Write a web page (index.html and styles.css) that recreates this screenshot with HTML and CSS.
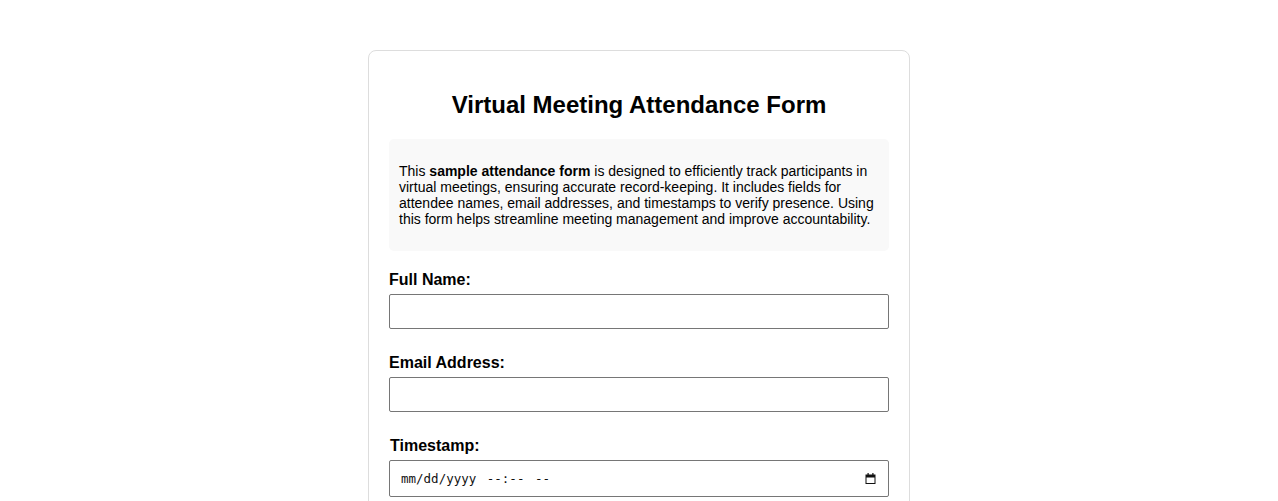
FILE: index.html
```html
<!DOCTYPE html>
<html lang="en">
<head>
<meta charset="utf-8">
<title>Virtual Meeting Attendance Form</title>
<link rel="stylesheet" href="styles.css">
</head>
<body>
<div class="card">
  <h2 class="title">Virtual Meeting Attendance Form</h2>
  <div class="desc">
    <p>This <strong>sample attendance form</strong> is designed to efficiently track participants in virtual meetings, ensuring accurate record-keeping. It includes fields for attendee names, email addresses, and timestamps to verify presence. Using this form helps streamline meeting management and improve accountability.</p>
  </div>
  <form class="form">
    <div class="group">
      <label class="label" for="name">Full Name:</label>
      <input class="field" type="text" id="name">
    </div>
    <div class="group">
      <label class="label" for="email">Email Address:</label>
      <input class="field" type="email" id="email">
    </div>
    <div class="group">
      <label class="label label-ts" for="ts">Timestamp:</label>
      <div class="field field-dt" id="ts" tabindex="0" role="textbox">
        <span class="dt-text">mm/dd/yyyy --:-- --</span>
        <svg class="dt-icon" width="11" height="11" viewBox="0 0 11 11" aria-hidden="true">
          <rect x="1" y="2" width="9" height="8.5" fill="none" stroke="#111" stroke-width="1"/>
          <rect x="1" y="2" width="9" height="2.5" fill="#111"/>
          <rect x="2.5" y="0" width="1.2" height="2.5" fill="#111"/>
          <rect x="7.3" y="0" width="1.2" height="2.5" fill="#111"/>
        </svg>
      </div>
    </div>
  </form>
</div>
</body>
</html>
```

FILE: styles.css
```css
body {
  margin: 0;
  background: #ffffff;
  font-family: "Liberation Sans", Arial, sans-serif;
  color: #000;
}
.card {
  max-width: 500px;
  margin: 50px auto 0;
  padding: 20px;
  border: 1px solid #ddd;
  border-radius: 8px;
}
.title {
  font-size: 24px;
  text-align: center;
  margin: 20px 0;
}
.desc {
  background: #f9f9f9;
  padding: 10px;
  border-radius: 5px;
  margin-bottom: 20px;
}
.desc p {
  margin: 14px 0;
  font-size: 14px;
  line-height: 16px;
}
.group {
  margin-bottom: 25px;
}
.label {
  display: block;
  font-weight: bold;
  font-size: 16px;
  margin-bottom: 5px;
}
.label-ts {
  padding-left: 1px;
}
.field {
  display: block;
  width: 100%;
  box-sizing: border-box;
  height: 35px;
  padding: 8px;
  border: 1px solid #767676;
  border-radius: 2px;
  margin: 0;
  background: #fff;
}
.field-dt {
  height: 37px;
  display: flex;
  align-items: center;
  justify-content: space-between;
  padding: 0 12px 0 11px;
}
.dt-text {
  font-family: "DejaVu Sans Mono", "Liberation Mono", monospace;
  font-size: 12.5px;
  color: #111;
  white-space: pre;
  word-spacing: 3px;
}
.dt-icon {
  display: block;
}
```
